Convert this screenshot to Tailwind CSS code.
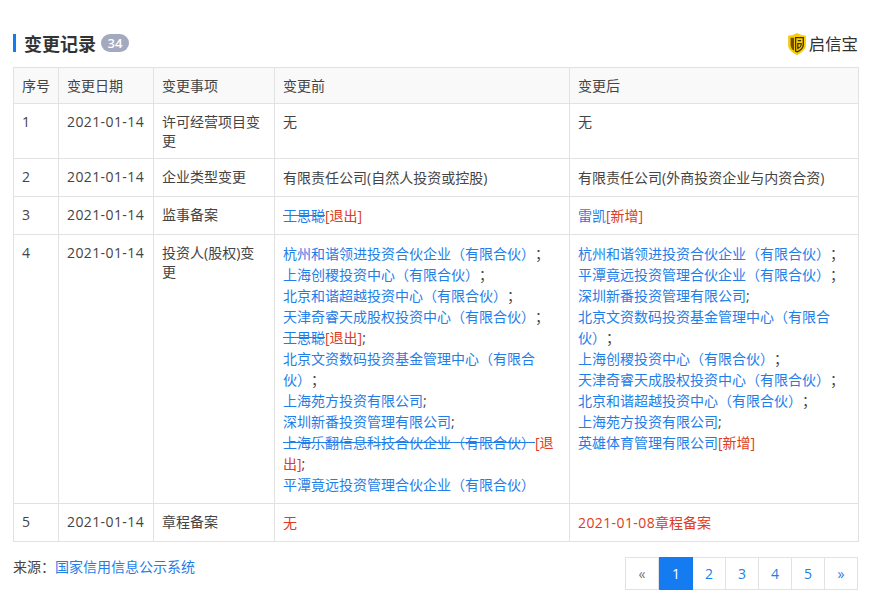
<!DOCTYPE html>
<html lang="zh">
<head>
<meta charset="utf-8">
<script src="https://cdn.jsdelivr.net/npm/@tailwindcss/browser@4"></script>
</head>
<body class="bg-white">
<div class="w-[872px] h-[610px] overflow-hidden pl-[13px] pr-[14px] pt-[31px] font-['Open_Sans','Noto_Sans_CJK_SC',sans-serif] text-[14px] leading-[19px] text-[#444] [text-spacing-trim:space-all]">
  <div class="flex items-center h-[24px] mb-[12px]">
    <span class="w-[3px] h-[18px] bg-[#157bf0] mr-[8px]"></span>
    <span class="text-[18px] font-bold leading-[26px] text-[#333] pt-[2px]">变更记录</span>
    <span class="ml-[5px] h-[18px] w-[28px] text-center rounded-full bg-[#a3a9bf] text-white text-[13px] font-semibold leading-[18px]">34</span>
    <span class="ml-auto flex items-center text-[16.4px] text-[#333] leading-[24px] pt-[2px]">
      <svg class="w-[18px] h-[22px] mr-[3px] -mt-[1px]" viewBox="0 0 18 22"><path d="M9 0.3 C11.5 2 14.5 2.8 17.7 3 V11.5 C17.7 16.5 13 20 9 21.7 C5 20 0.3 16.5 0.3 11.5 V3 C3.5 2.8 6.5 2 9 0.3 Z" fill="#f9cf00" stroke="#e8b400" stroke-width="0.5"/><path d="M2.6 4.8 V11.5 C2.6 14.5 4 16.5 6 17.8 V4.8 Z" fill="#6e4e00"/><path d="M7.6 4.6 H15.3 V11.5 C15.3 14.8 12.5 17.4 9.4 18.8 L7.6 18.2 Z" fill="none" stroke="#3f2e00" stroke-width="1.3"/><path d="M9.8 7.6 H13.2 M9.8 10.6 H13.2 V12 C13 13.6 11.5 14.8 9.8 15.5 Z" fill="none" stroke="#3f2e00" stroke-width="1.2"/></svg>
      启信宝
    </span>
  </div>
  <table class="w-[845px] table-fixed border-collapse border border-[#e2e2e2]">
    <colgroup><col class="w-[45px]"><col class="w-[95px]"><col class="w-[121px]"><col class="w-[295px]"><col class="w-[289px]"></colgroup>
    <thead class="bg-[#f9f9f9]">
      <tr class="h-[36px]">
        <th class="border border-[#e2e2e2] px-[8px] py-0 font-normal text-left">序号</th>
        <th class="border border-[#e2e2e2] px-[8px] py-0 font-normal text-left">变更日期</th>
        <th class="border border-[#e2e2e2] px-[8px] py-0 font-normal text-left">变更事项</th>
        <th class="border border-[#e2e2e2] px-[8px] py-0 font-normal text-left">变更前</th>
        <th class="border border-[#e2e2e2] px-[8px] py-0 font-normal text-left">变更后</th>
      </tr>
    </thead>
    <tbody>
      <tr>
        <td class="border border-[#e2e2e2] px-[8px] py-[8px] align-top">1</td>
        <td class="border border-[#e2e2e2] px-[8px] py-[8px] align-top tracking-[0.4px]">2021-01-14</td>
        <td class="border border-[#e2e2e2] px-[8px] py-[8px] align-top">许可经营项目变更</td>
        <td class="border border-[#e2e2e2] px-[8px] py-[8px] align-top">无</td>
        <td class="border border-[#e2e2e2] px-[8px] py-[8px] align-top">无</td>
      </tr>
      <tr>
        <td class="border border-[#e2e2e2] px-[8px] py-[8px] align-top">2</td>
        <td class="border border-[#e2e2e2] px-[8px] py-[8px] align-top tracking-[0.4px]">2021-01-14</td>
        <td class="border border-[#e2e2e2] px-[8px] py-[8px] align-top">企业类型变更</td>
        <td class="border border-[#e2e2e2] px-[8px] py-[8px] align-top leading-[21px]">有限责任公司(自然人投资或控股)</td>
        <td class="border border-[#e2e2e2] px-[8px] py-[8px] align-top leading-[21px]">有限责任公司(外商投资企业与内资合资)</td>
      </tr>
      <tr>
        <td class="border border-[#e2e2e2] px-[8px] py-[8px] align-top">3</td>
        <td class="border border-[#e2e2e2] px-[8px] py-[8px] align-top tracking-[0.4px]">2021-01-14</td>
        <td class="border border-[#e2e2e2] px-[8px] py-[8px] align-top">监事备案</td>
        <td class="border border-[#e2e2e2] px-[8px] py-[8px] align-top leading-[21px]"><a class="text-[#1f7ee8] line-through">王思聪</a><span class="text-[#dd3b22]">[退出]</span></td>
        <td class="border border-[#e2e2e2] px-[8px] py-[8px] align-top leading-[21px]"><a class="text-[#1f7ee8]">雷凯</a><span class="text-[#dd3b22]">[新增]</span></td>
      </tr>
      <tr>
        <td class="border border-[#e2e2e2] px-[8px] py-[8px] align-top">4</td>
        <td class="border border-[#e2e2e2] px-[8px] py-[8px] align-top tracking-[0.4px]">2021-01-14</td>
        <td class="border border-[#e2e2e2] px-[8px] py-[8px] align-top">投资人(股权)变更</td>
        <td class="border border-[#e2e2e2] px-[8px] py-[8px] align-top leading-[21px]">
          <div><a class="text-[#1f7ee8]">杭州和谐领进投资合伙企业（有限合伙）</a>；</div>
          <div><a class="text-[#1f7ee8]">上海创稷投资中心（有限合伙）</a>；</div>
          <div><a class="text-[#1f7ee8]">北京和谐超越投资中心（有限合伙）</a>；</div>
          <div><a class="text-[#1f7ee8]">天津奇睿天成股权投资中心（有限合伙）</a>；</div>
          <div><a class="text-[#1f7ee8] line-through">王思聪</a><span class="text-[#dd3b22]">[退出]</span>;</div>
          <div><a class="text-[#1f7ee8]">北京文资数码投资基金管理中心（有限合伙）</a>；</div>
          <div><a class="text-[#1f7ee8]">上海苑方投资有限公司</a>;</div>
          <div><a class="text-[#1f7ee8]">深圳新番投资管理有限公司</a>;</div>
          <div><a class="text-[#1f7ee8] line-through">上海乐翻信息科技合伙企业（有限合伙）</a><span class="text-[#dd3b22]">[退出]</span>;</div>
          <div><a class="text-[#1f7ee8]">平潭竟远投资管理合伙企业（有限合伙）</a></div>
        </td>
        <td class="border border-[#e2e2e2] px-[8px] py-[8px] align-top leading-[21px]">
          <div><a class="text-[#1f7ee8]">杭州和谐领进投资合伙企业（有限合伙）</a>；</div>
          <div><a class="text-[#1f7ee8]">平潭竟远投资管理合伙企业（有限合伙）</a>；</div>
          <div><a class="text-[#1f7ee8]">深圳新番投资管理有限公司</a>;</div>
          <div><a class="text-[#1f7ee8]">北京文资数码投资基金管理中心（有限合伙）</a>；</div>
          <div><a class="text-[#1f7ee8]">上海创稷投资中心（有限合伙）</a>；</div>
          <div><a class="text-[#1f7ee8]">天津奇睿天成股权投资中心（有限合伙）</a>；</div>
          <div><a class="text-[#1f7ee8]">北京和谐超越投资中心（有限合伙）</a>；</div>
          <div><a class="text-[#1f7ee8]">上海苑方投资有限公司</a>;</div>
          <div><a class="text-[#1f7ee8]">英雄体育管理有限公司</a><span class="text-[#dd3b22]">[新增]</span></div>
        </td>
      </tr>
      <tr>
        <td class="border border-[#e2e2e2] px-[8px] py-[8px] align-top">5</td>
        <td class="border border-[#e2e2e2] px-[8px] py-[8px] align-top tracking-[0.4px]">2021-01-14</td>
        <td class="border border-[#e2e2e2] px-[8px] py-[8px] align-top">章程备案</td>
        <td class="border border-[#e2e2e2] px-[8px] py-[8px] align-top leading-[21px] text-[#dd3b22]">无</td>
        <td class="border border-[#e2e2e2] px-[8px] py-[8px] align-top leading-[21px] text-[#dd3b22]"><span class="tracking-[0.4px]">2021-01-08</span>章程备案</td>
      </tr>
    </tbody>
  </table>
  <div class="flex items-start justify-between mt-[15px]">
    <div class="leading-[21px] -mt-px">来源：<a class="text-[#1f7ee8]">国家信用信息公示系统</a></div>
    <div class="flex h-[33px] border border-[#e2e2e2] text-[#1f7ee8] leading-[31px] text-center">
      <span class="w-[33px] border-r border-[#e2e2e2] text-[#777]">«</span>
      <span class="w-[34px] -my-px bg-[#157bf0] text-white leading-[33px]">1</span>
      <span class="w-[33px] border-r border-[#e2e2e2]">2</span>
      <span class="w-[33px] border-r border-[#e2e2e2]">3</span>
      <span class="w-[33px] border-r border-[#e2e2e2]">4</span>
      <span class="w-[33px] border-r border-[#e2e2e2]">5</span>
      <span class="w-[32px]">»</span>
    </div>
  </div>
</div>
</body>
</html>
